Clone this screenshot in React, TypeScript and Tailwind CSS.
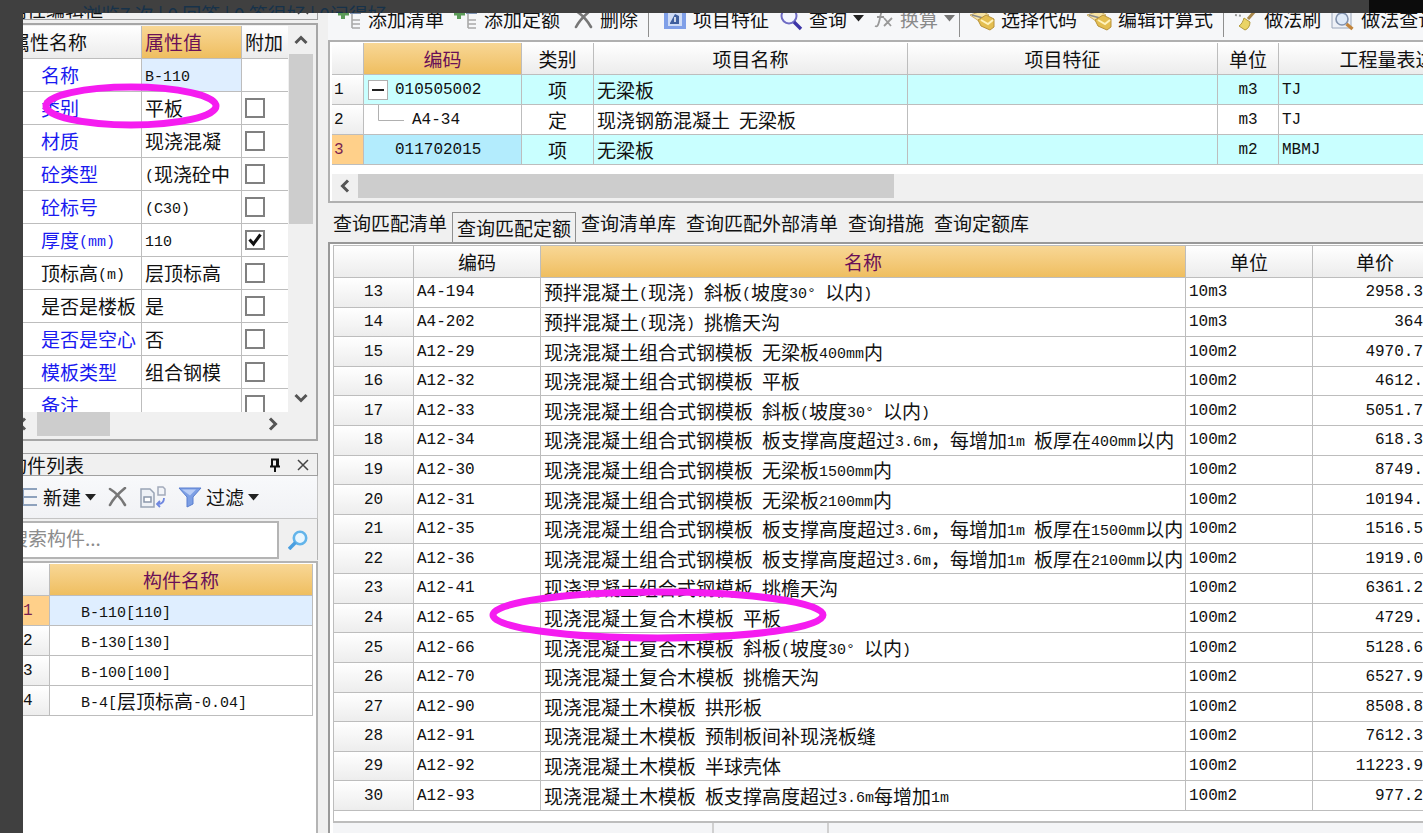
import type { ReactNode } from "react";

type Property = {
  label: string;
  value: string;
  linked?: boolean;
  extra?: boolean;
};

const PROPERTIES: Property[] = [
  { label: "名称", value: "B-110", linked: true },
  { label: "类别", value: "平板", linked: true, extra: false },
  { label: "材质", value: "现浇混凝", linked: true, extra: false },
  { label: "砼类型", value: "(现浇砼中", linked: true, extra: false },
  { label: "砼标号", value: "(C30)", linked: true, extra: false },
  { label: "厚度(mm)", value: "110", linked: true, extra: true },
  { label: "顶标高(m)", value: "层顶标高", extra: false },
  { label: "是否是楼板", value: "是", extra: false },
  { label: "是否是空心", value: "否", linked: true, extra: false },
  { label: "模板类型", value: "组合钢模", linked: true, extra: false },
  { label: "备注", value: "", linked: true, extra: false },
];

const MEMBERS = ["B-110[110]", "B-130[130]", "B-100[100]", "B-4[层顶标高-0.04]"];

const TABS = [
  "查询匹配清单",
  "查询匹配定额",
  "查询清单库",
  "查询匹配外部清单",
  "查询措施",
  "查询定额库",
];

const QUOTAS = [
  ["13", "A4-194", "预拌混凝土(现浇) 斜板(坡度30° 以内)", "10m3", "2958.3"],
  ["14", "A4-202", "预拌混凝土(现浇) 挑檐天沟", "10m3", "364"],
  ["15", "A12-29", "现浇混凝土组合式钢模板 无梁板400mm内", "100m2", "4970.7"],
  ["16", "A12-32", "现浇混凝土组合式钢模板 平板", "100m2", "4612."],
  ["17", "A12-33", "现浇混凝土组合式钢模板 斜板(坡度30° 以内)", "100m2", "5051.7"],
  ["18", "A12-34", "现浇混凝土组合式钢模板 板支撑高度超过3.6m，每增加1m 板厚在400mm以内", "100m2", "618.3"],
  ["19", "A12-30", "现浇混凝土组合式钢模板 无梁板1500mm内", "100m2", "8749."],
  ["20", "A12-31", "现浇混凝土组合式钢模板 无梁板2100mm内", "100m2", "10194."],
  ["21", "A12-35", "现浇混凝土组合式钢模板 板支撑高度超过3.6m，每增加1m 板厚在1500mm以内", "100m2", "1516.5"],
  ["22", "A12-36", "现浇混凝土组合式钢模板 板支撑高度超过3.6m，每增加1m 板厚在2100mm以内", "100m2", "1919.0"],
  ["23", "A12-41", "现浇混凝土组合式钢模板 挑檐天沟", "100m2", "6361.2"],
  ["24", "A12-65", "现浇混凝土复合木模板 平板", "100m2", "4729."],
  ["25", "A12-66", "现浇混凝土复合木模板 斜板(坡度30° 以内)", "100m2", "5128.6"],
  ["26", "A12-70", "现浇混凝土复合木模板 挑檐天沟", "100m2", "6527.9"],
  ["27", "A12-90", "现浇混凝土木模板 拱形板", "100m2", "8508.8"],
  ["28", "A12-91", "现浇混凝土木模板 预制板间补现浇板缝", "100m2", "7612.3"],
  ["29", "A12-92", "现浇混凝土木模板 半球壳体", "100m2", "11223.9"],
  ["30", "A12-93", "现浇混凝土木模板 板支撑高度超过3.6m每增加1m", "100m2", "977.2"],
];

const MONO = "font-['Liberation_Mono','Noto_Sans_CJK_SC',monospace] text-[16px]";
const HEAD =
  "border-r border-b border-[#bdbdbd] bg-linear-to-b from-white to-[#ececec] font-normal";
const HEAD_ACTIVE =
  "border-r border-b border-[#bdbdbd] bg-linear-to-b from-[#f8d795] to-[#efbe5f] font-normal text-[#6a1057]";
const CELL = "overflow-hidden border-r border-b border-[#bdbdbd] py-0";
const ROW_NO =
  "border-r border-b border-[#bdbdbd] bg-linear-to-b from-white to-[#ededed] py-0 font-normal";
const ROW_NO_ACTIVE =
  "border-r border-b border-[#bdbdbd] bg-[#ffd08a] py-0 font-normal text-[#7a1f50]";

// Half-width runs are set in a monospace face, as in a SimSun grid.
function Mixed({ text }: { text: string }) {
  return (
    <>
      {text.split(/([\x20-\x7e°]+)/).map((run, i) =>
        i % 2 === 1 ? (
          <span
            key={i}
            className="align-[2px] font-['Liberation_Mono',monospace] text-[15px] leading-none whitespace-pre"
          >
            {run}
          </span>
        ) : (
          run
        ),
      )}
    </>
  );
}

function Chevron({ d }: { d: string }) {
  return (
    <svg viewBox="0 0 14 14" className="size-3.5" aria-hidden>
      <path d={d} fill="none" stroke="#555" strokeWidth="3" />
    </svg>
  );
}

function Caret({ muted }: { muted?: boolean }) {
  return (
    <svg viewBox="0 0 11 7" className="h-[7px] w-[11px]" aria-hidden>
      <path d="M0 0h11L5.5 6.5z" fill={muted ? "#777" : "#222"} />
    </svg>
  );
}

function CrossIcon() {
  return (
    <svg viewBox="0 0 20 20" className="size-5" aria-hidden>
      <path d="M2 2c5 3 11 9 15 16M17 1C11 6 5 12 2 18" fill="none" stroke="#777" strokeWidth="2.6" strokeLinecap="round" />
    </svg>
  );
}

function AddListIcon() {
  return (
    <svg viewBox="0 0 24 24" className="size-6" aria-hidden>
      <path d="M5 1v11M0 6.500h11" stroke="#5b9b58" strokeWidth="4" />
      <path d="M12 6h11" stroke="#7f95b5" strokeWidth="2" />
      <path d="M14 7v14M14 13h8M14 17h8M14 21h8" fill="none" stroke="#a9a9a9" strokeWidth="1.6" />
    </svg>
  );
}

function FeatureIcon() {
  return (
    <svg viewBox="0 0 24 22" className="h-[22px] w-6" aria-hidden>
      <rect x="1" y="1" width="22" height="20" fill="#7f9fe8" />
      <rect x="5" y="4" width="14" height="14" fill="#cfdcf6" />
      <path d="M7 15l5-9 4 2v8H7z" fill="#3f5f9e" />
      <path d="M12 9v5" stroke="#fff" strokeWidth="1.5" />
    </svg>
  );
}

function LensIcon() {
  return (
    <svg viewBox="0 0 24 24" className="size-6" aria-hidden>
      <circle cx="10" cy="9" r="7.5" fill="#f4f6ff" stroke="#6e6bc4" strokeWidth="2" />
      <path d="M15 15l7 7" stroke="#3d35a8" strokeWidth="3.4" />
    </svg>
  );
}

function FxIcon() {
  return (
    <svg viewBox="0 0 20 20" className="size-5" aria-hidden>
      <path d="M11 2c-5-1-4 5-6 11-1 4-2 5-4 4M3 8h7M10 9l7 8M18 9l-8 8" fill="none" stroke="#999" strokeWidth="1.8" />
    </svg>
  );
}

function CodeIcon() {
  return (
    <svg viewBox="0 0 25 24" className="h-6 w-[25px]" aria-hidden>
      <path d="M0 8l12-4 7 4-5 5-5 1z" fill="#f6e3a4" stroke="#c9ad68" />
      <path d="M2 8l11 3" stroke="#8a8a8a" strokeWidth="1.5" />
      <path d="M8 13l8-5 8 4v8l-4 3-9-4z" fill="#e4be50" stroke="#b8923a" />
      <path d="M11 13l7 4 5-4" fill="none" stroke="#fff3bd" strokeWidth="2" />
    </svg>
  );
}

function BrushIcon() {
  return (
    <svg viewBox="0 0 24 24" className="size-6" aria-hidden>
      <path d="M1 8l8 1" stroke="#999" strokeWidth="2" strokeDasharray="2 2" />
      <path d="M21 4l-7 8" stroke="#a8874a" strokeWidth="3" />
      <path d="M10 11l6 4c0 4-2 7-5 8l-6-4c3-2 4-5 5-8z" fill="#ead465" stroke="#b39a3c" />
    </svg>
  );
}

function FindPageIcon() {
  return (
    <svg viewBox="0 0 24 24" className="size-6" aria-hidden>
      <path d="M1 2h19v19H1z" fill="#eef1f7" stroke="#9aa6ba" />
      <circle cx="11" cy="12" r="6" fill="#dfeaf8" stroke="#8292ad" strokeWidth="1.6" />
      <path d="M15.500 17l6 5" stroke="#c2853d" strokeWidth="3.4" />
    </svg>
  );
}

function PinIcon() {
  return (
    <svg viewBox="0 0 12 14" className="h-3.5 w-3" aria-hidden>
      <path d="M3 8V1.5h6V8M1 8.5h10M6 9v5M8 2v6" fill="none" stroke="#111" strokeWidth="2" />
    </svg>
  );
}

function CloseIcon() {
  return (
    <svg viewBox="0 0 12 12" className="size-3" aria-hidden>
      <path d="M1 1l10 10M11 1L1 11" stroke="#444" strokeWidth="1.5" />
    </svg>
  );
}

function PanelTitle({ title, pinnable }: { title: string; pinnable?: boolean }) {
  return (
    <div className="flex h-[23px] shrink-0 items-center border border-[#a0a0a0] bg-[#f0f0f0] pr-2">
      <h2 className="flex-1">{title}</h2>
      {pinnable && (
        <button type="button" aria-label="固定" className="mr-4">
          <PinIcon />
        </button>
      )}
      <button type="button" aria-label="关闭">
        <CloseIcon />
      </button>
    </div>
  );
}

function ToolButton({
  icon,
  label,
  menu,
  muted,
}: {
  icon: ReactNode;
  label: string;
  menu?: boolean;
  muted?: boolean;
}) {
  return (
    <button
      type="button"
      className={`flex shrink-0 items-center gap-1.5 ${muted ? "text-[#8a8a8a]" : ""}`}
    >
      <span className="flex min-w-5 justify-center">{icon}</span>
      {label}
      {menu && <Caret muted={muted} />}
    </button>
  );
}

function Divider() {
  return <div className="h-9 w-px shrink-0 bg-[#8f8f8f]" />;
}

function ExtraBox({ label, checked }: { label: string; checked: boolean }) {
  return (
    <span className="grid w-5 place-items-center">
      <input
        type="checkbox"
        aria-label={`${label} 附加`}
        defaultChecked={checked}
        className="peer col-start-1 row-start-1 size-5 appearance-none border-2 border-[#808080] bg-white"
      />
      <svg
        viewBox="0 0 14 14"
        className="pointer-events-none invisible col-start-1 row-start-1 size-3.5 peer-checked:visible"
        aria-hidden
      >
        <path d="M1.5 6.5L5.5 11l7-9.500" fill="none" stroke="#111" strokeWidth="3" />
      </svg>
    </span>
  );
}

function PropertyPanel() {
  return (
    <section className="shrink-0">
      <PanelTitle title="属性编辑框" />
      <div className="mt-[3px] border-t-2 border-r-2 border-b-2 border-[#a6a6a6] bg-[#f0f0f0] pt-px">
        <div className="flex h-[386px]">
          <div className="flex-1 overflow-hidden bg-white">
            <table className="w-full table-fixed border-separate border-spacing-0">
              <colgroup>
                <col />
                <col className="w-[100px]" />
                <col className="w-[46px]" />
              </colgroup>
              <thead>
                <tr className="h-[33px] text-left">
                  <th className={`${HEAD} pl-1`}>属性名称</th>
                  <th className={`${HEAD_ACTIVE} pl-[3px]`}>属性值</th>
                  <th className={`${HEAD} border-r-0 pl-[3px]`}>附加</th>
                </tr>
              </thead>
              <tbody>
                {PROPERTIES.map((p, i) => (
                  <tr key={p.label} className="h-[33px] whitespace-nowrap">
                    <td className={`${CELL} pl-[34px] ${p.linked ? "text-[#1a1af0]" : ""}`}>
                      <Mixed text={p.label} />
                    </td>
                    <td className={`${CELL} pl-[3px] ${i === 0 ? "bg-[#dfeeff]" : ""}`}>
                      <Mixed text={p.value} />
                    </td>
                    <td className={`${CELL} border-r-0 pl-[3px]`}>
                      {p.extra !== undefined && <ExtraBox label={p.label} checked={p.extra} />}
                    </td>
                  </tr>
                ))}
              </tbody>
            </table>
          </div>
          <div className="mr-[3px] ml-px flex w-6 flex-col items-center">
            <div className="flex h-7 items-center">
              <Chevron d="M1.500 10L7 4.500l5.500 5.500" />
            </div>
            <div className="h-[170px] w-full bg-[#cdcdcd]" />
            <div className="mt-auto flex h-7 items-center">
              <Chevron d="M1.500 4L7 9.500L12.500 4" />
            </div>
          </div>
        </div>
        <div className="flex h-[27px] items-start pr-9 pl-2">
          <div className="flex h-6 w-[22px] items-center">
            <Chevron d="M10 1.500L4.500 7l5.500 5.500" />
          </div>
          <div className="h-6 w-[73px] bg-[#cdcdcd]" />
          <div className="ml-auto flex h-6 items-center">
            <Chevron d="M4 1.500L9.500 7L4 12.500" />
          </div>
        </div>
      </div>
    </section>
  );
}

function MemberPanel() {
  return (
    <section className="mt-3 flex min-h-0 flex-1 flex-col">
      <PanelTitle title="构件列表" pinnable />
      <div className="flex h-[43px] shrink-0 items-center border-r border-b border-[#c4c4c4] bg-linear-to-b from-[#f8f9fb] to-[#f1f2f5] pl-3">
        <button type="button" className="flex items-center gap-1">
          <svg viewBox="0 0 20 22" className="h-[22px] w-5" aria-hidden>
            <path d="M4 3v16M4 3h14M4 11h14M4 19h14" fill="none" stroke="#8ea2bd" strokeWidth="2" />
          </svg>
          新建
          <Caret />
        </button>
        <button type="button" aria-label="删除" className="ml-3">
          <CrossIcon />
        </button>
        <button type="button" aria-label="复制" className="ml-3">
          <svg viewBox="0 0 26 22" className="h-[22px] w-[26px]" aria-hidden>
            <path d="M1 3h9l4 4v14H1z" fill="#eef1f6" stroke="#99a4b5" strokeWidth="1.5" />
            <path d="M4 11h7v5H4z" fill="#fff" stroke="#8b97ab" strokeWidth="1.5" />
            <path d="M18 1h5l2 2v6h-7z" fill="#f2f4f8" stroke="#a3abbb" strokeWidth="1.5" />
            <path d="M24 12c0 4-2 6-6 6M20 15l-3 3 3 3" fill="none" stroke="#6f87e0" strokeWidth="1.8" />
          </svg>
        </button>
        <button type="button" className="ml-3 flex items-center gap-1">
          <svg viewBox="0 0 24 22" className="h-[22px] w-6" aria-hidden>
            <path d="M1 2h22l-8 9v7l-6 3V11z" fill="#7d9fe4" stroke="#5a7fd0" />
            <path d="M4 3.500h14l-6 6z" fill="#b9cdf6" />
          </svg>
          过滤
          <Caret />
        </button>
      </div>
      <div className="flex h-[41px] shrink-0 items-center border-r border-[#b4b4b4] bg-[#f0f0f0]">
        <input
          type="search"
          aria-label="搜索构件"
          placeholder="搜索构件..."
          className="h-[38px] min-w-0 flex-1 border-2 border-[#b4b4b4] bg-white pb-1 placeholder:text-[#8c8c8c]"
        />
        <button type="button" aria-label="搜索" className="mx-[9px]">
          <svg viewBox="0 0 20 20" className="size-5" aria-hidden>
            <circle cx="12" cy="8" r="6.200" fill="#e8f6ff" stroke="#62b4ea" strokeWidth="2.600" />
            <path d="M7.500 12.500L1 19" stroke="#4a9fe0" strokeWidth="3.600" />
          </svg>
        </button>
      </div>
      <div className="mt-px flex-1 overflow-hidden border-t-2 border-r-2 border-[#b4b4b4] bg-white pt-px pr-[3px]">
        <table className="w-full table-fixed border-separate border-spacing-0">
          <colgroup>
            <col className="w-[43px]" />
            <col />
          </colgroup>
          <thead>
            <tr className="h-8">
              <th className={HEAD} />
              <th className={HEAD_ACTIVE}>构件名称</th>
            </tr>
          </thead>
          <tbody>
            {MEMBERS.map((name, i) => (
              <tr key={name} className="h-[30px]">
                <th className={`${i === 0 ? ROW_NO_ACTIVE : ROW_NO} ${MONO} pl-4 text-left`}>
                  {i + 1}
                </th>
                <td className={`${CELL} pl-[31px] ${i === 0 ? "bg-[#dfeeff]" : ""}`}>
                  <Mixed text={name} />
                </td>
              </tr>
            ))}
          </tbody>
        </table>
      </div>
    </section>
  );
}

function Toolbar() {
  return (
    <div className="flex h-[43px] shrink-0 items-center gap-2.5 overflow-hidden bg-[#f6f7f9] pl-2.5 whitespace-nowrap">
      <ToolButton icon={<AddListIcon />} label="添加清单" />
      <ToolButton icon={<AddListIcon />} label="添加定额" />
      <div className="flex items-center gap-2.5 px-1">
        <ToolButton icon={<CrossIcon />} label="删除" />
        <Divider />
      </div>
      <ToolButton icon={<FeatureIcon />} label="项目特征" />
      <ToolButton icon={<LensIcon />} label="查询" menu />
      <div className="flex items-center gap-1">
        <ToolButton icon={<FxIcon />} label="换算" menu muted />
        <Divider />
      </div>
      <ToolButton icon={<CodeIcon />} label="选择代码" />
      <ToolButton icon={<CodeIcon />} label="编辑计算式" />
      <Divider />
      <ToolButton icon={<BrushIcon />} label="做法刷" />
      <ToolButton icon={<FindPageIcon />} label="做法查询" />
    </div>
  );
}

function ItemGrid() {
  return (
    <div className="shrink-0 overflow-hidden border-t-2 border-b-2 border-l-2 border-[#b0b0b0] bg-white pt-px pl-0.5">
      <table className="w-[calc(100%+92px)] table-fixed border-separate border-spacing-0">
        <colgroup>
          <col className="w-8" />
          <col className="w-[158px]" />
          <col className="w-[72px]" />
          <col className="w-[314px]" />
          <col />
          <col className="w-[61px]" />
          <col className="w-[236px]" />
        </colgroup>
        <thead>
          <tr className="h-8">
            <th className={HEAD} />
            <th className={HEAD_ACTIVE}>编码</th>
            <th className={HEAD}>类别</th>
            <th className={HEAD}>项目名称</th>
            <th className={HEAD}>项目特征</th>
            <th className={HEAD}>单位</th>
            <th className={HEAD}>工程量表达式</th>
          </tr>
        </thead>
        <tbody>
          <tr className="h-[30px] bg-[#c9ffff]">
            <th className={`${ROW_NO} ${MONO} pl-0.5 text-left`}>1</th>
            <td className={`${CELL} pl-1`}>
              <span className="flex items-center gap-[7px]">
                <button
                  type="button"
                  aria-label="折叠"
                  className="flex size-5 items-center justify-center border border-[#b0b0b0] bg-white"
                >
                  <span className="h-0.5 w-3 bg-[#222]" />
                </button>
                <span className={MONO}>010505002</span>
              </span>
            </td>
            <td className={`${CELL} text-center`}>项</td>
            <td className={`${CELL} pl-[3px]`}>无梁板</td>
            <td className={CELL} />
            <td className={`${CELL} ${MONO} text-center`}>m3</td>
            <td className={`${CELL} ${MONO} pl-[3px]`}>TJ</td>
          </tr>
          <tr className="h-[30px]">
            <th className={`${ROW_NO} ${MONO} pl-0.5 text-left`}>2</th>
            <td className={`${CELL} pl-3.5`}>
              <span className="flex gap-2">
                <svg viewBox="0 0 26 29" className="h-[29px] w-[26px]" aria-hidden>
                  <path d="M.5 0v15.500H26" fill="none" stroke="#b0b0b0" />
                </svg>
                <span className={`${MONO} self-center`}>A4-34</span>
              </span>
            </td>
            <td className={`${CELL} text-center`}>定</td>
            <td className={`${CELL} pl-[3px]`}>
              <Mixed text="现浇钢筋混凝土 无梁板" />
            </td>
            <td className={CELL} />
            <td className={`${CELL} ${MONO} text-center`}>m3</td>
            <td className={`${CELL} ${MONO} pl-[3px]`}>TJ</td>
          </tr>
          <tr className="h-[30px] bg-[#c9ffff]">
            <th className={`${ROW_NO_ACTIVE} ${MONO} pl-0.5 text-left`}>3</th>
            <td className={`${CELL} ${MONO} bg-[#b3ecfd] pl-[31px]`}>011702015</td>
            <td className={`${CELL} text-center`}>项</td>
            <td className={`${CELL} pl-[3px]`}>无梁板</td>
            <td className={CELL} />
            <td className={`${CELL} ${MONO} text-center`}>m2</td>
            <td className={`${CELL} ${MONO} pl-[3px]`}>MBMJ</td>
          </tr>
        </tbody>
      </table>
      <div className="mt-[9px] flex h-[27px] bg-[#f0f0f0]">
        <div className="flex h-6 w-[26px] items-center justify-center">
          <Chevron d="M10 1.500L4.500 7l5.500 5.500" />
        </div>
        <div className="h-6 w-[536px] bg-[#cdcdcd]" />
      </div>
    </div>
  );
}

function QueryTabs() {
  return (
    <div role="tablist" className="flex h-[39px] shrink-0 items-end whitespace-nowrap">
      {TABS.map((tab, i) => (
        <button
          key={tab}
          type="button"
          role="tab"
          aria-selected={i === 1}
          className={
            i === 1
              ? "h-[30px] border border-b-0 border-[#8f8f8f] px-1"
              : "h-[30px] px-[5px] pb-2"
          }
        >
          {tab}
        </button>
      ))}
    </div>
  );
}

function QuotaGrid() {
  return (
    <div className="flex min-h-0 flex-1 flex-col border-t-2 border-l-2 border-[#999] bg-white pt-px pl-[3px]">
      <div className="min-h-0 flex-1 overflow-hidden border-t border-b-2 border-l border-[#bdbdbd] pb-2.5">
        <table className="h-full w-full table-fixed border-separate border-spacing-0">
          <colgroup>
            <col className="w-20" />
            <col className="w-[127px]" />
            <col />
            <col className="w-[127px]" />
            <col className="w-[110px]" />
          </colgroup>
          <thead>
            <tr className="h-8">
              <th className={HEAD} />
              <th className={HEAD}>编码</th>
              <th className={HEAD_ACTIVE}>名称</th>
              <th className={HEAD}>单位</th>
              <th className={`${HEAD} border-r-0 pl-3.5`}>单价</th>
            </tr>
          </thead>
          <tbody>
            {QUOTAS.map(([no, code, name, unit, price]) => (
              <tr key={no} className="h-[29px] whitespace-nowrap">
                <th className={`${ROW_NO} ${MONO} text-center`}>{no}</th>
                <td className={`${CELL} ${MONO} pl-[3px]`}>{code}</td>
                <td className={`${CELL} pl-[3px]`}>
                  <Mixed text={name} />
                </td>
                <td className={`${CELL} ${MONO} pl-[3px]`}>{unit}</td>
                <td className={`${CELL} ${MONO} border-r-0 text-right`}>{price}</td>
              </tr>
            ))}
          </tbody>
        </table>
      </div>
      <div className="flex h-2.5 shrink-0 bg-[#f4f5f7]">
        <div className="w-[381px] border-r-2 border-[#d0d0d0]" />
        <div className="w-[115px] border-r-2 border-[#d0d0d0]" />
      </div>
    </div>
  );
}

function Marker({ className, rx, ry }: { className: string; rx: number; ry: number }) {
  return (
    <svg
      className={`pointer-events-none absolute ${className}`}
      width={rx * 2 + 8}
      height={ry * 2 + 8}
      aria-hidden
    >
      <ellipse cx={rx + 4} cy={ry + 4} rx={rx} ry={ry} fill="none" stroke="#f51cf0" strokeWidth="7" />
    </svg>
  );
}

export default function App() {
  return (
    <div className="relative flex h-screen flex-col overflow-hidden bg-[#404040] font-['Noto_Sans_CJK_SC',sans-serif] text-[19px] leading-[22px] text-[#111]">
      <header className="flex h-[13px] shrink-0 justify-between overflow-hidden pl-[82px] text-[#17324a]">
        <p className="pt-[3px] whitespace-nowrap">浏览7 次 | 0 回答 | 0 答很好 | 0问得好</p>
        <div className="w-[54px] bg-[#0c0c0c]" />
      </header>
      <main className="ml-[23px] min-h-0 flex-1 overflow-hidden bg-[#f0f0f0]">
        <div className="-mt-4 -ml-4 flex h-[calc(100%+16px)] gap-2.5">
          <aside className="flex w-[311px] shrink-0 flex-col">
            <PropertyPanel />
            <MemberPanel />
          </aside>
          <div className="flex min-w-0 flex-1 flex-col">
            <Toolbar />
            <ItemGrid />
            <QueryTabs />
            <QuotaGrid />
          </div>
        </div>
      </main>
      <Marker className="top-[83px] left-[42px]" rx={85} ry={19} />
      <Marker className="top-[588px] left-[489px]" rx={165} ry={23} />
    </div>
  );
}
